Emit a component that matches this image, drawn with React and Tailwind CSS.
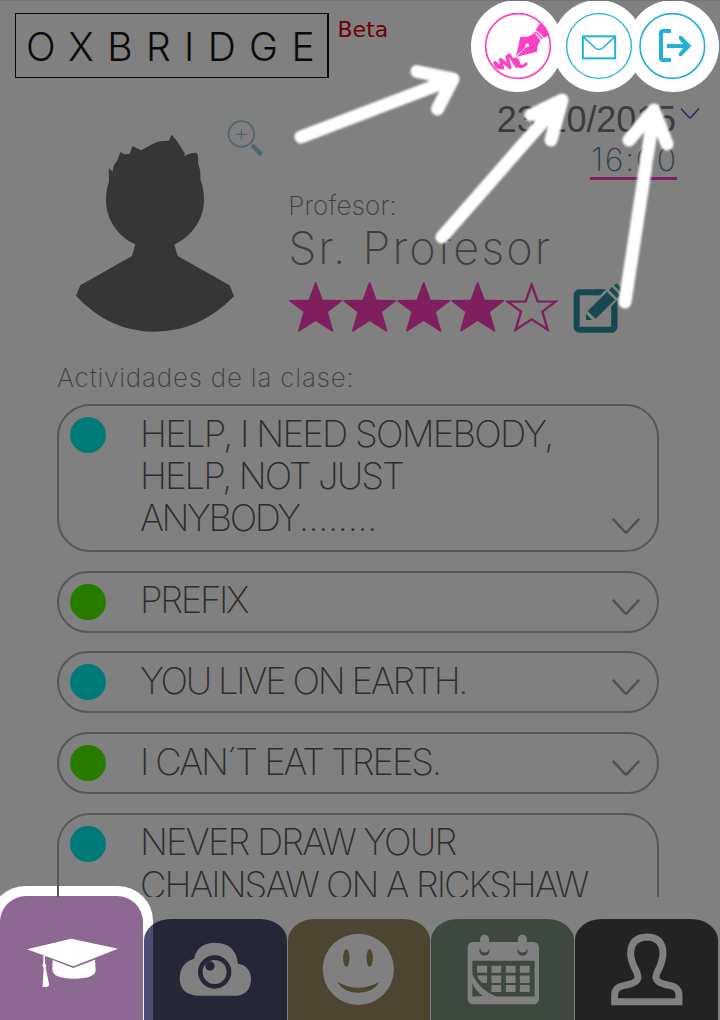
import React from "react";

const THIN = "font-['Inter','Liberation_Sans',sans-serif]";

const activities = [
  {
    color: "bg-[#007a78]",
    size: "h-[148px] rounded-[33px]",
    lines: [
      [["HELP, I NEED SOMEBODY,", "tracking-[-1.730px]"]],
      [["HELP, NOT JUST", "tracking-[-1.950px]"]],
      [
        ["ANYBODY", "tracking-[-2.400px]"],
        ["........", "tracking-[-0.300px]"],
      ],
    ],
  },
  { color: "bg-[#267b00]", size: "h-[62px] rounded-[31px]", lines: [[["PREFIX", "tracking-[-2.300px]"]]] },
  { color: "bg-[#007a78]", size: "h-[62px] rounded-[31px]", lines: [[["YOU LIVE ON EARTH.", "tracking-[-2.230px]"]]] },
  { color: "bg-[#267b00]", size: "h-[62px] rounded-[31px]", lines: [[["I CAN´T EAT TREES.", "tracking-[-2.140px]"]]] },
  {
    color: "bg-[#007a78]",
    size: "h-[148px] rounded-[33px]",
    lines: [
      [["NEVER DRAW YOUR", "tracking-[-1.850px]"]],
      [["CHAINSAW ON A RICKSHAW", "tracking-[-2px]"]],
    ],
  },
];

function SignButton() {
  return (
    <svg className="h-[92px] w-[92px] shrink-0" viewBox="123 0 276 276">
      <circle cx="261" cy="138" r="138" fill="#fff" />
      <circle cx="264" cy="138" r="97" fill="none" stroke="#ff3fc4" strokeWidth="5" />
      <path d="M258 171 L271 110 Q298 113 313 98 L331 121 Q321 136 321 155 Z" fill="#ff3fc4" />
      <path d="M258 171 L290 138" stroke="#fff" strokeWidth="3" />
      <circle cx="292" cy="136" r="5.500" fill="#fff" />
      <path d="M317 91 L331 68 Q352 82 357 106 L341 114 Q333 99 317 91 Z" fill="#ff3fc4" />
      <path d="M313 96 Q328 101 336 118" fill="none" stroke="#ff3fc4" strokeWidth="4" />
      <path d="M195 188 L217 204 L212 179 Q224 187 240 203 L231 170 L238 165 L260 199 L255 177 L262 180 L270 200 Q279 202 288 192" fill="none" stroke="#ff3fc4" strokeWidth="9.500" strokeLinecap="round" strokeLinejoin="round" />
      <path d="M195 189 Q197 202 210 204 L219 202" fill="none" stroke="#ff3fc4" strokeWidth="8" strokeLinecap="round" />
    </svg>
  );
}

function MailButton() {
  return (
    <svg className="-ml-[11px] h-[92px] w-[92px] shrink-0" viewBox="366 0 276 276">
      <circle cx="504" cy="138" r="138" fill="#fff" />
      <circle cx="507" cy="138" r="97" fill="none" stroke="#22b0dc" strokeWidth="4" />
      <rect x="458.500" y="109" width="97" height="66" fill="none" stroke="#22b0dc" strokeWidth="6" />
      <path d="M461 112 L496 144 Q507 153 518 144 L553 112" fill="none" stroke="#22b0dc" strokeWidth="4.500" />
    </svg>
  );
}

function LogoutButton() {
  return (
    <svg className="-ml-[17px] h-[92px] w-[92px] shrink-0" viewBox="591 0 276 276">
      <clipPath id="disc-edge">
        <rect x="612" y="0" width="260" height="276" />
      </clipPath>
      <circle cx="729" cy="138" r="138" fill="#fff" clipPath="url(#disc-edge)" />
      <circle cx="727" cy="138" r="97" fill="none" stroke="#22b0dc" strokeWidth="5" />
      <path d="M723 93 H698 Q693 93 693 98 V175 Q693 180 698 180 H723" fill="none" stroke="#22b0dc" strokeWidth="12" />
      <path d="M711 138 H768" stroke="#22b0dc" strokeWidth="12" />
      <path d="M747 108 H755 L784 138 L755 168 H747 V160 L764 138 L747 117 Z" fill="#22b0dc" />
    </svg>
  );
}

function Avatar() {
  return (
    <svg className="mt-[42.300px] h-[198.300px] w-[160px] shrink-0" viewBox="75 73 480 595">
      <path
        fill="#363636"
        d="M176 174 L188 187 L190 170 L202 152 L211 127 L223 134 L239 132 L247 109 L273 122 L314 100 Q330 92 356 93 L365 75 L381 94 L405 132 L401 140 Q420 129 437 129 Q444 131 444 143 L445 164 Q453 183 451 208 Q462 237 462 271 C462 330 424 381 373 405 L383 439 L539 527 L552 560 Q448 666 315 666 Q177 666 78 558 L91 527 L246 439 L256 404 C203 380 168 330 168 271 Q168 239 177 216 Z"
      />
    </svg>
  );
}

function ZoomIcon() {
  return (
    <svg className="-ml-[8.500px] mt-[28px] h-[37.300px] w-[36.700px] shrink-0" viewBox="528 28 110 112">
      <circle cx="571" cy="70" r="38.500" fill="none" stroke="#4d6670" strokeWidth="5.500" />
      <path d="M554 71 H588 M571 56 V87" stroke="#4d6670" strokeWidth="3.500" />
      <path d="M603 103 L631 132" stroke="#4d6670" strokeWidth="13" />
    </svg>
  );
}

function Star({ filled }) {
  return (
    <svg className="h-[50px] w-[54px] shrink-0" viewBox="26 669 162 150">
      {filled ? (
        <path fill="#7f1f5e" d="M104 670 H108 L127 722 L185 723 V727 L143 759 L159 816 L156 818 L106 786 L56 818 L53 816 L69 759 L27 727 V723 L85 722 Z" />
      ) : (
        <path fill="none" stroke="#7f1f5e" strokeWidth="7" d="M106 677 L124 727 L178 728 L138 758 L154 812 L106 781 L58 812 L74 758 L34 728 L88 727 Z" />
      )}
    </svg>
  );
}

function EditIcon() {
  return (
    <svg className="ml-[13.500px] h-[51.700px] w-[48.300px] shrink-0" viewBox="430 305 145 155">
      <rect x="441" y="336" width="113" height="112" rx="7" fill="none" stroke="#17484f" strokeWidth="18" />
      <path d="M520 327 L546 305 L575 300 V348 L563 363 L496 428 L460 428 L462 392 Z" fill="#808080" />
      <path d="M546 377 L563 360 V440 H546 Z M529 327 L512 345 H498 V327 Z" fill="#17484f" />
      <path d="M532 335 L556 358 L498 415 L474 392 Z" fill="#17484f" />
      <path d="M469 401 L487 419 H469 Z" fill="#17484f" />
      <path d="M538 329 L547 320 L571 344 L562 353 Z M553 315 L561 309 L575 323 V337 Z" fill="#17484f" />
    </svg>
  );
}

function Chevron({ className, stroke, width }) {
  return (
    <svg className={className} viewBox="0 0 28 16">
      <path d="M0.800 0.800 L12.500 13.500 Q14 15 15.500 13.500 L27.200 0.800" fill="none" stroke={stroke} strokeWidth={width} />
    </svg>
  );
}

function Activity({ item }) {
  return (
    <li className={`flex shrink-0 border-2 border-[#575757] pl-[11px] pr-[17px] ${item.size}`}>
      <span className={`mt-[11px] h-[36px] w-[36px] shrink-0 rounded-full ${item.color}`} />
      <div className="ml-[34px] flex-1 pt-[6.700px]">
        {item.lines.map((runs) => (
          <p key={runs[0][0]} className="h-[42.300px] whitespace-nowrap text-[36.500px] font-extralight leading-[42.300px] text-[#2e2e2e]">
            {runs.map(([text, tracking]) => (
              <span key={text} className={tracking}>
                {text}
              </span>
            ))}
          </p>
        ))}
      </div>
      <Chevron className="mb-[16px] h-[16px] w-[28px] self-end" stroke="#505050" width="2.500" />
    </li>
  );
}

function Tab({ className, children }) {
  return (
    <button className={`flex h-[101.500px] w-[142.700px] shrink-0 items-start justify-center rounded-t-[27px_21px] ${className}`}>
      {children}
    </button>
  );
}

function Arrows() {
  return (
    <svg className="pointer-events-none absolute left-0 top-0 h-[340px] w-[720px]" viewBox="0 0 720 340">
      <defs>
        <filter id="soft" x="-10%" y="-10%" width="120%" height="120%">
          <feGaussianBlur stdDeviation="1.200" />
        </filter>
      </defs>
      <g fill="none" stroke="#fff" strokeWidth="13" strokeLinecap="round" strokeLinejoin="round" filter="url(#soft)">
        <path d="M301 136 L453 78 M417 70.500 L453 78 L437.500 108" />
        <path d="M442 236 L562 99 M531 114 L562 99 L551 139" />
        <path d="M625 301 L654 111 M629 139 L654 109 L667 143" />
      </g>
    </svg>
  );
}

export default function App() {
  return (
    <div className={`relative flex h-[1020px] w-[720px] flex-col overflow-hidden border-t border-[#757575] bg-[#808080] ${THIN}`}>
      <header className="-mt-px flex h-[92px] shrink-0 items-start pl-[15px]">
        <div className="mt-[13px] flex h-[65px] w-[314px] shrink-0 items-center border border-r-2 border-[#0a0a0a] pl-[10px] pt-[2px]">
          <h1 className="whitespace-nowrap text-[39px] font-light leading-none tracking-[13.400px] text-[#0a0a0a]">OXBRIDGE</h1>
        </div>
        <span className="ml-[8.500px] mt-[17px] font-['DejaVu_Sans',sans-serif] text-[22px] leading-[26px] text-[#6e0000]">Beta</span>
        <nav className="ml-auto mr-[1px] flex">
          <SignButton />
          <MailButton />
          <LogoutButton />
        </nav>
      </header>

      <section className="flex h-[260px] shrink-0 pl-[75px]">
        <Avatar />
        <ZoomIcon />
        <div className="ml-[25px] flex flex-1 flex-col">
          <div className="flex h-[50px] justify-end pr-[20px] pt-[7px]">
            <span className="font-['Liberation_Sans',sans-serif] text-[36px] leading-[42px] tracking-[-0.100px] text-[#3c3c3c]">23/10/2015</span>
            <Chevron className="ml-[4px] mt-[9px] h-[11px] w-[20px]" stroke="#1d2f5c" width="2.200" />
          </div>
          <div className="mr-[43px] h-[38px] w-[87px] self-end border-b-[3px] border-[#7f1f5e] pl-[1px]">
            <span className="text-[32px] font-extralight leading-[36px] tracking-[1.700px] text-[#2b4254]">16:00</span>
          </div>
          <p className="mt-[10px] h-[31px] whitespace-nowrap text-[26px] font-extralight leading-[31px] tracking-[0.200px] text-[#3f3f3f]">Profesor:</p>
          <p className="h-[50px] whitespace-nowrap text-[45px] font-extralight leading-[54px] tracking-[2.150px] text-[#3f3f3f]">Sr. Profesor</p>
          <div className="ml-[1px] mt-[11px] flex">
            <Star filled />
            <Star filled />
            <Star filled />
            <Star filled />
            <Star />
            <EditIcon />
          </div>
        </div>
      </section>

      <section className="relative z-10 flex h-[545px] shrink-0 flex-col overflow-hidden pl-[57px] pr-[61px]">
        <h2 className="mt-[10px] h-[32px] shrink-0 whitespace-nowrap text-[26px] font-extralight leading-[32px] tracking-[0.800px] text-[#3f3f3f]">
          Actividades de la clase:
        </h2>
        <ul className="mt-[10px] flex flex-col gap-[18.700px]">
          {activities.map((item) => (
            <Activity key={item.lines[0][0][0]} item={item} />
          ))}
        </ul>
      </section>

      <span className="absolute -left-[10px] top-[885px] h-[140px] w-[163px] rounded-t-[35px] bg-white" />
      <footer className="relative -mt-px flex h-[124px] shrink-0 items-end gap-[1px]">
        <button className="flex h-[124px] w-[143px] shrink-0 justify-center rounded-t-[26px] bg-[#8d6892] pt-[42px]">
          <svg className="h-[50px] w-[92px]" viewBox="77 205 276 150">
            <path fill="#fff" d="M80 239 L213 207 L353 237 L219 290 Z M157 271 L219 295 L284 270 L286 302 Q284 327 221 327 Q155 327 156 297 Z" />
            <path fill="#fff" d="M129 258 H134 V281 Q140 286 136 294 L147 347 Q143 354 127 351 L130 294 Q123 286 129 281 Z" />
          </svg>
        </button>
        <Tab className="bg-[linear-gradient(to_right,#4b4e6f_9px,#252736_9px)] pt-[23px]">
          <svg className="h-[55px] w-[73.300px]" viewBox="538 217 220 165">
            <path fill="#808080" d="M594 378 Q540 374 540 324 Q542 279 583 267 Q594 219 647 219 Q708 220 715 282 Q754 289 754 330 Q752 374 710 378 Z" />
            <circle cx="645" cy="307" r="43" fill="#808080" stroke="#252736" strokeWidth="14" />
            <circle cx="631" cy="289" r="14" fill="#252736" />
          </svg>
        </Tab>
        <Tab className="bg-[#4d4431] pt-[14px]">
          <svg className="h-[73.300px] w-[73.300px]" viewBox="128 190 220 220">
            <circle cx="237" cy="299" r="107" fill="#808080" />
            <ellipse cx="201" cy="265" rx="9.500" ry="27" fill="#4d4431" />
            <ellipse cx="271" cy="265" rx="9.500" ry="27" fill="#4d4431" />
            <path d="M173 336 Q237 373 301 336 Q281 369 237 369 Q193 369 173 336 Z" fill="#4d4431" />
          </svg>
        </Tab>
        <Tab className="bg-[#3d493e] pl-[1.500px] pt-[15px]">
          <svg className="h-[71px] w-[73px]" viewBox="560 193 218 212">
            <rect x="562" y="217" width="213" height="186" rx="16" fill="#808080" />
            <circle cx="612" cy="243" r="15" fill="#3d493e" />
            <circle cx="726" cy="243" r="15" fill="#3d493e" />
            <path d="M594 218 H630 V236 H594 Z M708 218 H744 V236 H708 Z" fill="#808080" />
            <rect x="599" y="195" width="27" height="53" rx="13" fill="#808080" />
            <rect x="712" y="195" width="27" height="53" rx="13" fill="#808080" />
            <path d="M576 273 H762 V380 H648 Q597 360 576 314 Z M576 340 Q584 361 607 378 L576 380 Z" fill="#3d493e" />
            <path
              fill="#808080"
              d="M590 288 h30 v21 h-30 Z M633 288 h29 v21 h-29 Z M676 288 h29 v21 h-29 Z M718 288 h29 v21 h-29 Z M590 317 h30 v22 h-14 Q594 331 590 317 Z M633 317 h29 v22 h-29 Z M676 317 h29 v22 h-29 Z M718 317 h29 v22 h-29 Z M633 345 h29 v21 h-29 Z M676 345 h29 v21 h-29 Z M718 345 h29 v21 h-29 Z"
            />
          </svg>
        </Tab>
        <Tab className="bg-[#232323] pt-[14px]">
          <svg className="h-[73.300px] w-[73.300px]" viewBox="988 190 220 220">
            <path
              fill="none"
              stroke="#808080"
              strokeWidth="21"
              d="M1002 396 V374 Q1003 353 1028 348 Q1072 341 1072 323 Q1072 313 1062 295 Q1050 270 1050 250 Q1052 203 1099 202 Q1146 203 1147 250 Q1147 270 1136 295 Q1126 313 1126 323 Q1126 341 1170 348 Q1194 353 1195 374 V396 Z"
            />
          </svg>
        </Tab>
      </footer>

      <Arrows />
    </div>
  );
}
